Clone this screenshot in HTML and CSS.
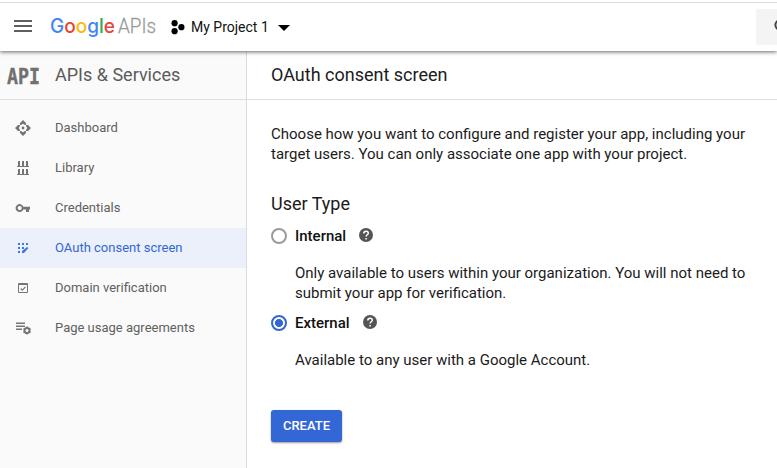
FILE: index.html
```html
<!DOCTYPE html>
<html lang="en">
<head>
<meta charset="utf-8">
<title>OAuth consent screen</title>
<link rel="stylesheet" href="styles.css">
</head>
<body>
<header class="topbar">
  <svg class="menu" width="18" height="12" viewBox="0 0 18 12"><path d="M0 0h18v2H0zM0 5h18v2H0zM0 10h18v2H0z"/></svg>
  <svg class="logo" width="108" height="36" viewBox="0 0 108 36">
    <text class="google" x="0" y="22.500" textLength="65" lengthAdjust="spacingAndGlyphs"><tspan class="blue">G</tspan><tspan class="red">o</tspan><tspan class="yellow">o</tspan><tspan class="blue">g</tspan><tspan class="green">l</tspan><tspan class="red">e</tspan></text>
    <text class="apis" x="68" y="22.500" textLength="38" lengthAdjust="spacingAndGlyphs">APIs</text>
  </svg>
  <svg class="hex" width="14" height="15" viewBox="0 0 14 15"><circle cx="3.6" cy="3.2" r="3.1"/><circle cx="3.6" cy="11.2" r="3.1"/><circle cx="10.4" cy="7.2" r="3.1"/></svg>
  <span class="project">My Project 1</span>
  <svg class="caret" width="12" height="6" viewBox="0 0 12 6"><path d="M0 0h12L6 6z"/></svg>
  <div class="search"><svg width="16" height="16" viewBox="0 0 16 16"><circle cx="6" cy="6" r="4.6"/><path d="M9.5 9.5l5 5"/></svg></div>
</header>
<div class="layout">
  <nav class="sidebar">
    <div class="side-head">
      <svg class="api" width="33" height="28" viewBox="0 0 33 28"><text x="0" y="22.500" textLength="33" lengthAdjust="spacingAndGlyphs">API</text></svg>
      <span>APIs &amp; Services</span>
    </div>
    <ul class="nav">
      <li><svg width="16" height="16" viewBox="0 0 16 16"><path d="M8 0l3 3v2H10L8 3.800 6 5H5V3zM8 16l3-3v-2H10l-2 1.200L6 11H5v2zM0 8l3-3h2v1L3.800 8 5 10v1H3zM16 8l-3-3h-2v1l1.200 2L11 10v1h2z"/><circle cx="8" cy="8" r="1.400"/></svg><span>Dashboard</span></li>
      <li><svg width="16" height="16" viewBox="0 0 16 16"><path d="M2 6h12v1H2zM3 1h2v5H3zM7 1h2v5H7zM11 1h2v5h-2zM2 14h12v1H2zM3 9h2v5H3zM7 9h2v5H7zM11 9h2v5h-2z"/></svg><span>Library</span></li>
      <li><svg width="16" height="16" viewBox="0 0 16 16"><path fill-rule="evenodd" d="M8.300 6.700A4 4 0 1 0 8.300 9.500H11V12h3V9.500h1V6.700zM4.700 6a2.100 2.100 0 1 1 0 4.200 2.100 2.100 0 0 1 0-4.200z"/></svg><span>Credentials</span></li>
      <li class="active"><svg width="16" height="16" viewBox="0 0 16 16"><path d="M3 3h2v2H3zM7 3h2v2H7zM11 3h2v2h-2zM3 7h2v2H3zM7 7h2v2H7zM3 11h2v2H3zM7 13v-2l5-4 1.500 1L9 13z"/></svg><span>OAuth consent screen</span></li>
      <li><svg width="16" height="16" viewBox="0 0 16 16"><path fill-rule="evenodd" d="M4 3h8a1 1 0 0 1 1 1v8a1 1 0 0 1-1 1H4a1 1 0 0 1-1-1V4a1 1 0 0 1 1-1zm0 2v7h8V5z"/><path class="line" d="M5.700 8.500l1.600 1.600 3.200-3.300"/></svg><span>Domain verification</span></li>
      <li><svg width="16" height="16" viewBox="0 0 16 16"><path d="M1 2.500h9V4H1zM1 5.500h9V7H1zM1 8.500h6V10H1z"/><circle class="gear" cx="12" cy="10.500" r="2.500"/><path class="teeth" d="M12 6.500v1.500M12 13v1.500M8.500 8.500l1.300.7M14.200 11.800l1.300.7M15.500 8.500l-1.300.7M9.800 11.800l-1.300.7"/></svg><span>Page usage agreements</span></li>
    </ul>
  </nav>
  <main class="main">
    <h1>OAuth consent screen</h1>
    <div class="content">
      <p class="intro">Choose how you want to configure and register your app, including your<br>target users. You can only associate one app with your project.</p>
      <h2>User Type</h2>
      <div class="option"><i class="radio"></i><b>Internal</b><svg class="help" width="14" height="14" viewBox="0 0 14 14"><circle cx="7" cy="7" r="7"/><path d="M4.800 5.400C4.800 2.400 9.300 2.500 9.300 5.200 9.300 6.700 7.100 6.900 7.100 8.600"/><path d="M7.100 10v1.600"/></svg></div>
      <p class="desc">Only available to users within your organization. You will not need to<br>submit your app for verification.</p>
      <div class="option second"><i class="radio on"></i><b>External</b><svg class="help" width="14" height="14" viewBox="0 0 14 14"><circle cx="7" cy="7" r="7"/><path d="M4.800 5.400C4.800 2.400 9.300 2.500 9.300 5.200 9.300 6.700 7.100 6.900 7.100 8.600"/><path d="M7.100 10v1.600"/></svg></div>
      <p class="desc">Available to any user with a Google Account.</p>
      <button class="create">CREATE</button>
    </div>
  </main>
</div>
</body>
</html>
```
FILE: styles.css
```css
* { box-sizing: border-box; }
body { margin: 0; height: 468px; overflow: hidden; background: #fff; color: #1b1b1b; font-family: Roboto, "Liberation Sans", sans-serif; }
.topbar { position: relative; z-index: 1; display: flex; align-items: center; height: 51px; padding: 3px 0 0 14px; background: linear-gradient(#dcdcdc, #dcdcdc) 0 2px / 100% 1px no-repeat #fff; box-shadow: 0 1px 4px rgba(0,0,0,.6); }
.menu { fill: #5f5f5f; margin-top: -2px; }
.logo { margin-left: 18px; margin-top: 1px; overflow: visible; }
.google { font: 500 20px Inter, sans-serif; }
.apis { font: 300 20px Roboto, sans-serif; fill: #999; stroke: #999; stroke-width: .3; }
.blue { fill: #4285f4; }
.red { fill: #ea4335; }
.yellow { fill: #fbbc05; }
.green { fill: #34a853; }
.hex { margin-left: 13px; }
.project { margin-left: 6px; font-size: 14px; color: #111; }
.caret { margin-left: 9px; margin-top: 2px; }
.search { width: 21px; height: 36px; margin-left: auto; padding: 10px 0 0 18px; overflow: hidden; background: #f4f4f4; border-radius: 2px 0 0 2px; }
.search svg { display: block; fill: none; stroke: #444; stroke-width: 2; }
.layout { display: flex; height: 417px; }
.sidebar { flex: none; width: 247px; background: #fafafa; border-right: 1px solid #dcdcdc; }
.side-head { display: flex; align-items: center; height: 49px; padding-left: 7px; border-bottom: 1px solid #dedede; color: #5a5a5a; font-size: 18px; }
.side-head span { margin: -2px 0 0 15px; }
.api { font: bold 22px "DejaVu Sans Mono", monospace; fill: #707070; stroke: #707070; stroke-width: .4; overflow: visible; }
.nav { margin: 8px 0 0; padding: 0; list-style: none; }
.nav li { display: flex; align-items: center; height: 40px; padding-left: 15px; color: #616161; font-size: 13px; }
.nav span { margin: -2px 0 0 24px; }
.nav svg { fill: #757575; }
.nav .line { fill: none; stroke: #757575; stroke-width: 1.1; }
.nav .gear { fill: none; stroke: #757575; stroke-width: 2; }
.nav .teeth { fill: none; stroke: #757575; stroke-width: 1.6; }
.nav .active { background: #ebf0fa; color: #3367d6; }
.nav .active svg { fill: #3b78e7; }
.main { flex: 1; }
h1 { margin: 0; height: 49px; padding-left: 24px; border-bottom: 1px solid #dedede; font-size: 18px; font-weight: 400; line-height: 48px; }
.content { padding: 24px 0 0 24px; }
p { margin: 0; font-size: 15px; line-height: 20px; white-space: nowrap; }
h2 { margin: 28px 0 0; font-size: 18px; font-weight: 400; line-height: 24px; }
.option { display: flex; align-items: center; height: 20px; margin-top: 10px; font-size: 15px; color: #111; }
.option b { margin-left: 8px; font-weight: 500; }
.radio { width: 16px; height: 16px; border: 2px solid #9a9a9a; border-radius: 50%; }
.radio.on { border-color: #3367d6; background: radial-gradient(circle, #3367d6 3.7px, #fff 4.3px); }
.help { margin-left: 13px; margin-top: -2px; fill: #555; }
.help path { fill: none; stroke: #fff; stroke-width: 1.5; }
.desc { margin: 17px 0 0 24px; }
.create { display: block; width: 71px; height: 32px; margin-top: 40px; padding: 0 0 1px; border: 0; border-radius: 3px; background: #3367d6; box-shadow: 0 1px 2px rgba(0,0,0,.4); color: #fff; font: 500 13px/30px Roboto, sans-serif; }
```
